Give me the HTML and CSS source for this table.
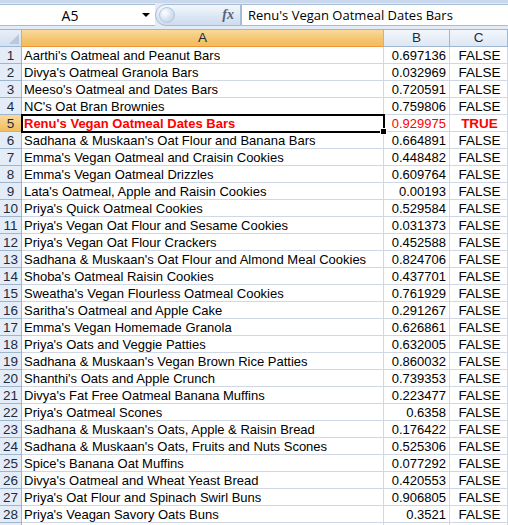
FILE: index.html
```html
<!DOCTYPE html>
<html>
<head>
<meta charset="utf-8">
<link rel="stylesheet" href="styles.css">
</head>
<body>
<div class="fbar">
  <div class="namebox"><span class="ref">A5</span><span class="arrow"></span></div>
  <div class="fxpill"><span class="knob"></span><span class="fx">fx</span></div>
  <div class="formula">Renu's Vegan Oatmeal Dates Bars</div>
</div>
<div class="sheet">
  <div class="corner"><span class="tri"></span></div>
  <div class="ch sel">A</div>
  <div class="ch">B</div>
  <div class="ch">C</div>

  <div class="rh">1</div><div class="c a">Aarthi's Oatmeal and Peanut Bars</div><div class="c b">0.697136</div><div class="c t">FALSE</div>
  <div class="rh">2</div><div class="c a">Divya's Oatmeal Granola Bars</div><div class="c b">0.032969</div><div class="c t">FALSE</div>
  <div class="rh">3</div><div class="c a">Meeso's Oatmeal and Dates Bars</div><div class="c b">0.720591</div><div class="c t">FALSE</div>
  <div class="rh">4</div><div class="c a">NC's Oat Bran Brownies</div><div class="c b">0.759806</div><div class="c t">FALSE</div>
  <div class="rh sel">5</div><div class="c a hl active">Renu's Vegan Oatmeal Dates Bars<span class="handle"></span></div><div class="c b red">0.929975</div><div class="c t red strong">TRUE</div>
  <div class="rh">6</div><div class="c a">Sadhana &amp; Muskaan's Oat Flour and Banana Bars</div><div class="c b">0.664891</div><div class="c t">FALSE</div>
  <div class="rh">7</div><div class="c a">Emma's Vegan Oatmeal and Craisin Cookies</div><div class="c b">0.448482</div><div class="c t">FALSE</div>
  <div class="rh">8</div><div class="c a">Emma's Vegan Oatmeal Drizzles</div><div class="c b">0.609764</div><div class="c t">FALSE</div>
  <div class="rh">9</div><div class="c a">Lata's Oatmeal, Apple and Raisin Cookies</div><div class="c b">0.00193</div><div class="c t">FALSE</div>
  <div class="rh">10</div><div class="c a">Priya's Quick Oatmeal Cookies</div><div class="c b">0.529584</div><div class="c t">FALSE</div>
  <div class="rh">11</div><div class="c a">Priya's Vegan Oat Flour and Sesame Cookies</div><div class="c b">0.031373</div><div class="c t">FALSE</div>
  <div class="rh">12</div><div class="c a">Priya's Vegan Oat Flour Crackers</div><div class="c b">0.452588</div><div class="c t">FALSE</div>
  <div class="rh">13</div><div class="c a">Sadhana &amp; Muskaan's Oat Flour and Almond Meal Cookies</div><div class="c b">0.824706</div><div class="c t">FALSE</div>
  <div class="rh">14</div><div class="c a">Shoba's Oatmeal Raisin Cookies</div><div class="c b">0.437701</div><div class="c t">FALSE</div>
  <div class="rh">15</div><div class="c a">Sweatha's Vegan Flourless Oatmeal Cookies</div><div class="c b">0.761929</div><div class="c t">FALSE</div>
  <div class="rh">16</div><div class="c a">Saritha's Oatmeal and Apple Cake</div><div class="c b">0.291267</div><div class="c t">FALSE</div>
  <div class="rh">17</div><div class="c a">Emma's Vegan Homemade Granola</div><div class="c b">0.626861</div><div class="c t">FALSE</div>
  <div class="rh">18</div><div class="c a">Priya's Oats and Veggie Patties</div><div class="c b">0.632005</div><div class="c t">FALSE</div>
  <div class="rh">19</div><div class="c a">Sadhana &amp; Muskaan's Vegan Brown Rice Patties</div><div class="c b">0.860032</div><div class="c t">FALSE</div>
  <div class="rh">20</div><div class="c a">Shanthi's Oats and Apple Crunch</div><div class="c b">0.739353</div><div class="c t">FALSE</div>
  <div class="rh">21</div><div class="c a">Divya's Fat Free Oatmeal Banana Muffins</div><div class="c b">0.223477</div><div class="c t">FALSE</div>
  <div class="rh">22</div><div class="c a">Priya's Oatmeal Scones</div><div class="c b">0.6358</div><div class="c t">FALSE</div>
  <div class="rh">23</div><div class="c a">Sadhana &amp; Muskaan's Oats, Apple &amp; Raisin Bread</div><div class="c b">0.176422</div><div class="c t">FALSE</div>
  <div class="rh">24</div><div class="c a">Sadhana &amp; Muskaan's Oats, Fruits and Nuts Scones</div><div class="c b">0.525306</div><div class="c t">FALSE</div>
  <div class="rh">25</div><div class="c a">Spice's Banana Oat Muffins</div><div class="c b">0.077292</div><div class="c t">FALSE</div>
  <div class="rh">26</div><div class="c a">Divya's Oatmeal and Wheat Yeast Bread</div><div class="c b">0.420553</div><div class="c t">FALSE</div>
  <div class="rh">27</div><div class="c a">Priya's Oat Flour and Spinach Swirl Buns</div><div class="c b">0.906805</div><div class="c t">FALSE</div>
  <div class="rh">28</div><div class="c a">Priya's Veagan Savory Oats Buns</div><div class="c b">0.3521</div><div class="c t">FALSE</div>
  <div class="rh"></div><div class="c a"></div><div class="c b"></div><div class="c t"></div>
</div>
</body>
</html>
```

FILE: styles.css
```css
html, body {
  margin: 0;
  padding: 0;
  background: #ffffff;
  overflow: hidden;
}
body {
  width: 508px;
  height: 525px;
  font-family: "Liberation Sans", Arial, sans-serif;
}
.fbar {
  height: 29px;
  box-sizing: border-box;
  background: #e3ebf6;
  border-top: 3px solid #c9d8ec;
  padding: 1px 0 3px 0;
  display: flex;
}
.namebox {
  width: 155px;
  background: #ffffff;
  border-top: 1px solid #a5bcd8;
  border-bottom: 1px solid #a5bcd8;
  display: flex;
  align-items: center;
}
.ref {
  width: 140px;
  text-align: center;
  font-family: "Open Sans", "Noto Sans", sans-serif;
  font-size: 14px;
  color: #000;
}
.arrow {
  width: 0;
  height: 0;
  border-left: 4px solid transparent;
  border-right: 4px solid transparent;
  border-top: 4px solid #000;
  margin-left: 2px;
}
.fxpill {
  width: 86px;
  box-sizing: border-box;
  border: 1px solid #a7bcd6;
  border-radius: 11px 0 0 11px;
  background: linear-gradient(#f4f8fd, #dce7f5 55%, #cfdcee);
  display: flex;
  align-items: center;
  justify-content: space-between;
  padding: 0 6px 0 3px;
}
.knob {
  width: 14px;
  height: 14px;
  border-radius: 50%;
  background: radial-gradient(circle at 35% 35%, #ffffff, #c9d8ec 70%, #b4c7e1);
  border: 1px solid #b5c8e1;
}
.fx {
  font-family: "Liberation Serif", "Times New Roman", serif;
  font-style: italic;
  font-weight: bold;
  font-size: 14px;
  color: #55627a;
}
.formula {
  flex: 1;
  background: #ffffff;
  border-top: 1px solid #a5bcd8;
  border-bottom: 1px solid #a5bcd8;
  border-left: 1px solid #a5bcd8;
  font-family: "Open Sans", "Noto Sans", sans-serif;
  font-size: 13px;
  line-height: 20px;
  padding-left: 6px;
  color: #000;
  white-space: nowrap;
}
.sheet {
  display: grid;
  grid-template-columns: 22px 362px 66px 58px;
  grid-template-rows: 18px;
  grid-auto-rows: 17px;
  font-size: 13px;
}
.corner {
  box-sizing: border-box;
  background: linear-gradient(#e7eef8, #d4e0f0);
  border-right: 1px solid #9eb6ce;
  border-bottom: 1px solid #9eb6ce;
  border-top: 1px solid #9eb6ce;
  position: relative;
}
.tri {
  position: absolute;
  right: 2px;
  bottom: 2px;
  width: 0;
  height: 0;
  border-left: 10px solid transparent;
  border-bottom: 10px solid #b8c8dd;
}
.ch {
  box-sizing: border-box;
  background: linear-gradient(#f3f7fc, #dde7f4);
  border-top: 1px solid #9eb6ce;
  border-right: 1px solid #9eb6ce;
  border-bottom: 1px solid #9eb6ce;
  text-align: center;
  line-height: 16px;
  font-size: 13.5px;
  color: #1e2a40;
}
.ch.sel {
  background: linear-gradient(#f9da9c, #f4c672 55%, #f1bd5d);
  border-bottom: 1px solid #f29436;
  border-right: 1px solid #f2a84c;
}
.rh {
  box-sizing: border-box;
  background: #e4ecf7;
  border-right: 1px solid #9eb6ce;
  border-bottom: 1px solid #9eb6ce;
  text-align: center;
  line-height: 17px;
  font-size: 13.5px;
  color: #1e2a40;
}
.rh.sel {
  background: linear-gradient(#f9da9c, #f1bd5d);
  border-right: 1px solid #f29436;
}
.c {
  box-sizing: border-box;
  border-right: 1px solid #d0d7e5;
  border-bottom: 1px solid #d0d7e5;
  line-height: 17px;
  white-space: nowrap;
  overflow: hidden;
  color: #000;
}
.a {
  padding-left: 2px;
}
.b {
  text-align: right;
  padding-right: 3px;
}
.t {
  text-align: center;
  padding-left: 2px;
  font-size: 13.5px;
}
.red {
  color: #ff0000;
}
.strong {
  font-weight: bold;
}
.hl {
  color: #ff0000;
  font-weight: bold;
}
.active {
  position: relative;
  overflow: visible;
  outline: 2px solid #000;
  outline-offset: -1px;
  z-index: 1;
}
.handle {
  position: absolute;
  right: -4px;
  bottom: -4px;
  width: 5px;
  height: 5px;
  background: #000;
  border: 1px solid #fff;
}
```
